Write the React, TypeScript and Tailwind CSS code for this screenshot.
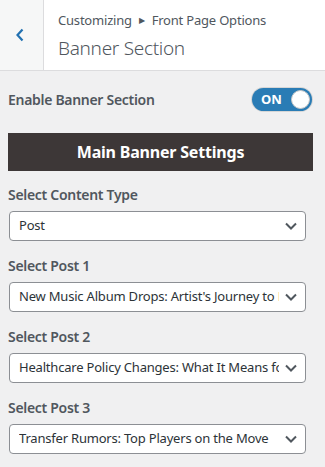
import { useState } from "react";

const FONT = "font-['Segoe_UI','Noto_Sans',sans-serif]";

type SelectProps = {
  label: string;
  value: string;
};

function SelectField({ label, value }: SelectProps) {
  return (
    <div>
      <p className="text-[14px] font-semibold tracking-[-0.3px] text-[#50575e] leading-[20px] mb-[6px]">{label}</p>
      <div className="h-[30px] ml-px mr-[11px] bg-white border border-[#8c8f94] rounded-[4px] flex items-center pl-[9px] pr-[8px]">
        <span className="flex-1 min-w-0 text-[13px] tracking-[-0.2px] text-[#2c3338] whitespace-nowrap overflow-hidden">
          {value}
        </span>
        <svg
          className="ml-[6px] shrink-0 w-[12px] h-[8px]"
          viewBox="0 0 12 8"
          fill="none"
          stroke="#50575e"
          strokeWidth={2}
        >
          <path d="M1 1.5l5 5 5-5" />
        </svg>
      </div>
    </div>
  );
}

export default function App() {
  const [enabled, setEnabled] = useState(true);

  return (
    <div className={`${FONT} w-[325px] h-[467px] bg-[#f0f0f1] overflow-hidden`}>
      {/* Header */}
      <div className="flex h-[71px] bg-white border-b border-[#dcdcde]">
        <button className="w-[44px] bg-[#f6f7f7] border-r border-[#dcdcde] flex items-center justify-center">
          <svg className="w-[10px] h-[14px] -ml-[4px]" viewBox="0 0 10 14" fill="none" stroke="#2271b1" strokeWidth={2.2}>
            <path d="M7.5 1.5L2.5 7l5 5.5" />
          </svg>
        </button>
        <div className="pl-[14px] pt-[10px]">
          <p className="text-[13px] tracking-[-0.2px] text-[#50575e] leading-[20px] flex items-center">
            Customizing
            <span className="text-[8px] mx-[7px]">▶</span>
            Front Page Options
          </p>
          <h1 className="text-[19px] font-light tracking-[-0.3px] text-[#50575e] leading-[28px] mt-[4px]">Banner Section</h1>
        </div>
      </div>

      <div className="px-[8px]">
        {/* Toggle */}
        <div className="mt-[17px] flex items-center justify-between h-[23px]">
          <span className="text-[14px] font-semibold tracking-[-0.3px] text-[#50575e]">Enable Banner Section</span>
          <button
            onClick={() => setEnabled(!enabled)}
            className="mr-[5px] w-[60px] h-[23px] rounded-full bg-[#2a7cb5] ring-1 ring-[#d6d6d6] flex items-center justify-between pl-[9px] pr-[2px]"
          >
            <span className="text-[13px] font-bold text-white leading-none">ON</span>
            <span className="w-[19px] h-[19px] rounded-full bg-white border border-[#c8c8c8]" />
          </button>
        </div>

        {/* Section title */}
        <div className="mt-[22px] mr-[4px] h-[38px] bg-[#3d3737] flex items-center justify-center">
          <span className="text-[16px] font-bold tracking-[-0.2px] text-white">Main Banner Settings</span>
        </div>

        <div className="mt-[14px] flex flex-col gap-[15px]">
          <SelectField label="Select Content Type" value="Post" />
          <SelectField label="Select Post 1" value="New Music Album Drops: Artist's Journey to Fame" />
          <SelectField label="Select Post 2" value="Healthcare Policy Changes: What It Means for You" />
          <SelectField label="Select Post 3" value="Transfer Rumors: Top Players on the Move" />
        </div>
      </div>
    </div>
  );
}
